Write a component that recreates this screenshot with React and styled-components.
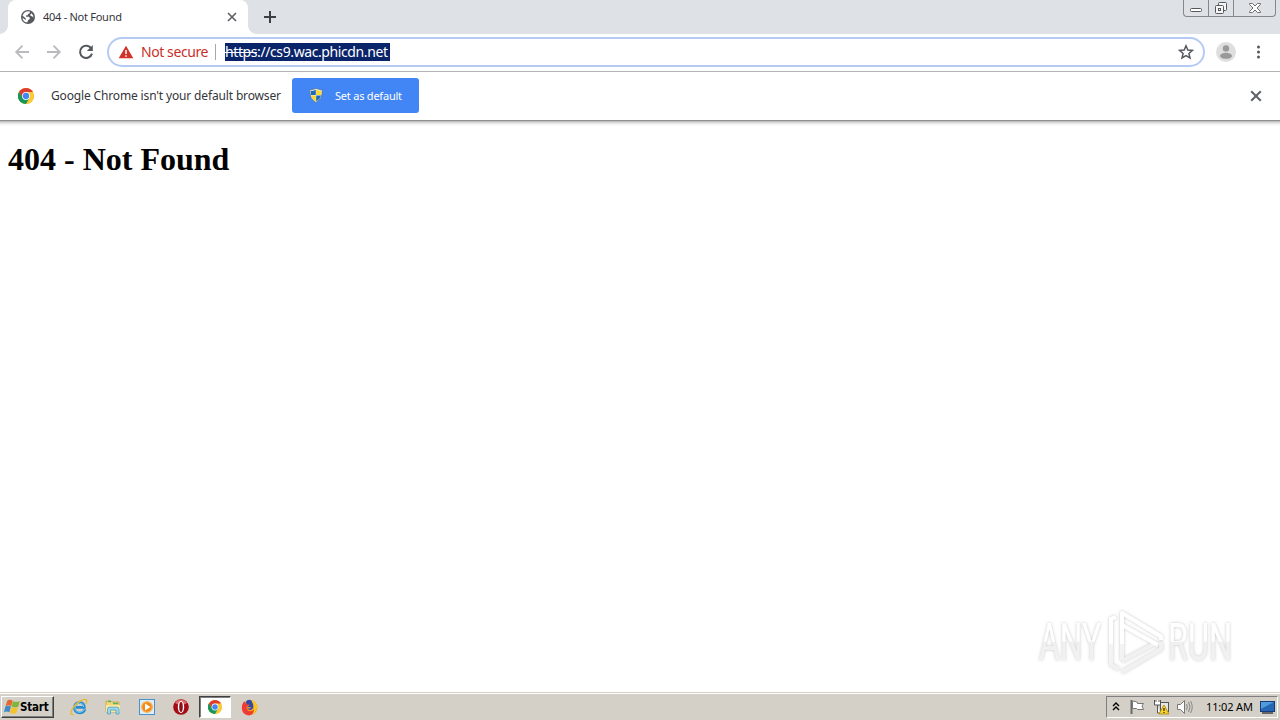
import React from 'react';
import styled, { createGlobalStyle } from 'styled-components';

const Global = createGlobalStyle`
  * { box-sizing: border-box; }
  html, body { margin: 0; overflow: hidden; }
  body { font-family: "DejaVu Sans Condensed", "DejaVu Sans", sans-serif; }
  svg { display: block; flex: none; }
`;

const Screen = styled.div`
  width: 1280px;
  height: 720px;
  display: flex;
  flex-direction: column;
  background: #fff;
  overflow: hidden;
`;

const Label = styled.span`
  font-family: ${p => p.$font || '"Noto Sans", sans-serif'};
  font-size: ${p => p.$size}px;
  letter-spacing: ${p => p.$track || 0}px;
  color: ${p => p.$color || '#35363a'};
  font-weight: ${p => p.$weight || 400};
  line-height: 18px;
  white-space: pre;
`;

const TabStrip = styled.header`
  height: 34px;
  flex: none;
  display: flex;
  background: #dee1e6;
`;

const Tab = styled.div`
  position: relative;
  width: 240px;
  margin-left: 8px;
  padding: 0 11px 0 13px;
  display: flex;
  align-items: center;
  background: #fff;
  border-radius: 8px 8px 0 0;
  &::before, &::after {
    content: "";
    position: absolute;
    bottom: 0;
    width: 8px;
    height: 8px;
  }
  &::before { left: -8px; background: radial-gradient(circle at 0 0, #dee1e6 7.5px, #fff 8px); }
  &::after { right: -8px; background: radial-gradient(circle at 100% 0, #dee1e6 7.5px, #fff 8px); }
`;

const TabTitle = styled.div`
  flex: 1;
  display: flex;
  margin-left: 8px;
`;

const NewTab = styled.div`
  display: flex;
  align-items: center;
  margin-left: 15px;
  flex: 1;
`;

const WindowButtons = styled.div`
  display: flex;
  width: 93px;
  height: 17px;
  margin-right: 4px;
  border: 1px solid #85878d;
  border-top: 0;
  border-radius: 0 0 4px 4px;
`;

const WindowButton = styled.div`
  width: ${p => p.$w}px;
  display: flex;
  justify-content: center;
  border-right: ${p => (p.$last ? 0 : 1)}px solid #85878d;
`;

const Toolbar = styled.nav`
  height: 38px;
  flex: none;
  display: flex;
  align-items: center;
  padding: 0 11px 1px 14px;
  border-bottom: 1px solid #b3b4b8;
`;

const NavIcons = styled.div`
  display: flex;
  gap: 16px;
  width: 93px;
`;

const Omnibox = styled.div`
  width: 1098px;
  height: 30px;
  display: flex;
  align-items: center;
  border: 2px solid #b5cbf3;
  border-radius: 15px;
  padding: 0 9px 0 9px;
`;

const Security = styled.div`
  display: flex;
  align-items: center;
  gap: 7px;
  width: 98px;
  height: 16px;
  border-right: 1px solid #a5a7ab;
`;

const Selection = styled.div`
  display: flex;
  align-items: center;
  width: 165px;
  height: 18px;
  margin: 0 auto 0 9px;
  background: #0a246a;
  s { text-decoration-thickness: 1px; }
`;

const Avatar = styled.div`
  margin: 0 17px 0 11px;
`;

const InfoBar = styled.section`
  height: 49px;
  flex: none;
  display: flex;
  align-items: center;
  padding: 0 18px 1px;
  border-bottom: 1px solid #8e8e8e;
`;

const InfoMessage = styled.div`
  display: flex;
  width: 241px;
  margin-left: 17px;
`;

const DefaultButton = styled.div`
  width: 127px;
  height: 35px;
  display: flex;
  align-items: center;
  gap: 12px;
  padding-left: 17px;
  margin-right: auto;
  border-radius: 3px;
  background: #4285f4;
`;

const Page = styled.main`
  position: relative;
  flex: 1;
  padding: 19px 8px;
  background: linear-gradient(#b4b4b4, #e2e2e2 2px, #fafafa 4px, #fff 6px);
`;

const Heading = styled.h1`
  margin: 0;
  font: bold 32px/38px "Liberation Serif", serif;
  color: #000;
`;

const Watermark = styled.div`
  position: absolute;
  left: 1028px;
  top: 483px;
  svg { overflow: visible; }
`;

const Taskbar = styled.footer`
  height: 28px;
  flex: none;
  display: flex;
  align-items: center;
  padding: 3px 2px 2px;
  background: #d4d0c8;
  border-top: 1px solid #d4d0c8;
  box-shadow: inset 0 1px #fff;
`;

const StartButton = styled.div`
  width: 53px;
  height: 22px;
  display: flex;
  align-items: center;
  gap: 0;
  padding-left: 2px;
  margin-left: -1px;
  border: 1px solid;
  border-color: #fff #404040 #404040 #fff;
  box-shadow: inset -1px -1px #808080;
`;

const Launcher = styled.div`
  display: flex;
  align-items: center;
  justify-content: center;
  width: ${p => p.$w}px;
  height: 22px;
  margin-left: ${p => p.$gap || 0}px;
  ${p => p.$active && `
    background: #fff;
    border: 1px solid;
    border-color: #404040 #fff #fff #404040;
    box-shadow: inset 1px 1px #808080;
  `}
`;

const Tray = styled.div`
  display: flex;
  align-items: center;
  width: 172px;
  height: 22px;
  margin-left: auto;
  padding-left: 5px;
  border: 1px solid;
  border-color: #808080 #fff #fff #808080;
`;

const TrayItem = styled.div`
  display: flex;
  width: ${p => p.$w}px;
`;

const Cross = ({ size, color = '#5f6368', stroke = 2 }) => (
  <svg width={size} height={size} viewBox="0 0 10 10">
    <path d="M1 1L9 9M9 1L1 9" stroke={color} strokeWidth={stroke} fill="none" />
  </svg>
);

const Globe = () => (
  <svg width="14" height="14" viewBox="0 0 14 14">
    <circle cx="7" cy="7" r="7" fill="#56585c" />
    <path d="M5.2 1.5L8.7 1.2L8.8 3.2L7 4L6.8 5.2L4.8 5.5L5.2 6.8H8L9 8.2L8.2 9.6L7.2 10L6.2 12.6Q2 12 1.5 7.7L4.7 10V8.3L1.6 5.7Q2.4 2.5 5.2 1.5ZM10.4 3.2Q12.6 5 12.6 7.5L11 6.3L9.6 6L9.2 4.7Z" fill="#fff" />
  </svg>
);

const Arrow = ({ flip }) => (
  <svg width="16" height="16" viewBox="0 0 16 16">
    <path transform={flip ? 'translate(16 0) scale(-1 1)' : undefined} d="M15 8H2.5M8.5 1.7L2.2 8L8.5 14.3" stroke="#b9babd" strokeWidth="1.8" fill="none" />
  </svg>
);

const Reload = () => (
  <svg width="16" height="16" viewBox="0 0 16 16">
    <path d="M13.4 4.7A6.1 6.1 0 1 0 14 9.6" stroke="#55585d" strokeWidth="2" fill="none" />
    <path d="M14.8 1V7H8.8Z" fill="#55585d" />
  </svg>
);

const Chrome = ({ size }) => (
  <svg width={size} height={size} viewBox="0 0 32 32">
    <circle cx="16" cy="16" r="16" fill="#fcc934" />
    <path d="M16 16L2.15 8A16 16 0 0 1 29.85 8Z" fill="#dd3d31" />
    <path d="M16 8H29.85A16 16 0 0 1 16 32L22.9 20Z" fill="#fcc934" />
    <path d="M2.15 8A16 16 0 0 0 16 32L22.9 20L16 16L9.1 20Z" fill="#17985a" />
    <path d="M2.15 8L9.1 20L16 16V8Z" fill="#dd3d31" />
    <path d="M2.15 8A16 16 0 0 0 6 28.5L9.1 20Z" fill="#17985a" />
    <circle cx="16" cy="16" r="7.8" fill="#fff" />
    <circle cx="16" cy="16" r="6.3" fill="#4285f4" />
  </svg>
);

const Shield = () => (
  <svg width="14" height="15" viewBox="0 0 14 15">
    <path d="M7 .5L13.3 2.2Q13.5 10.6 7 14.5Q.5 10.6 .7 2.2Z" fill="#e9edf0" stroke="#59646a" strokeWidth=".6" />
    <path d="M6.8 1.7V7H1.8L1.7 3Q4.5 3 6.8 1.7Z" fill="#1e69b8" />
    <path d="M7.2 1.7Q9.5 3 12.3 3L12.2 7H7.2Z" fill="#f8d82c" />
    <path d="M1.9 7.4H6.8V13.4Q2.8 11 1.9 7.4Z" fill="#f8d82c" />
    <path d="M7.2 7.4H12.1Q11.2 11 7.2 13.4Z" fill="#1e69b8" />
  </svg>
);

const WindowsFlag = () => (
  <svg width="16" height="16" viewBox="0 0 16 16">
    <path d="M3.2 1.7Q5.8 -.2 8.6 1.7L7.2 7.2Q4.6 5.6 1.7 7.1Z" fill="#e4682f" />
    <path d="M9 2Q12 3.7 15.8 2L14.3 7.8Q10.5 9.2 7.6 7.5Z" fill="#82b63a" />
    <path d="M1.4 7.6Q4 6 6.9 7.6L5.4 13.3Q2.7 11.7 0 13.2Z" fill="#3e8ac9" />
    <path d="M7.3 8Q10.2 9.7 14 8.3L12.4 14.1Q9 15.4 5.9 13.8Z" fill="#f4c22b" />
  </svg>
);

const Explorer = () => (
  <svg width="18" height="18" viewBox="0 0 18 18">
    <path d="M15 11.2Q13.5 15 9.4 15Q4.4 14.5 4.4 9.6Q4.6 4.8 9.4 4.5Q14.4 4.8 14.4 9.4H6" stroke="#278bd0" strokeWidth="2.6" fill="none" />
    <path d="M14.6 11.4Q12.8 14.3 9.3 14.3Q4.9 13.6 5 9.4Q5.5 5.3 9.4 5Q13.6 5.2 13.8 9" stroke="#7bd0f6" strokeWidth="1" fill="none" />
    <path d="M3.5 16.3Q0 17.3 1.2 13.3Q3.5 7.5 9.5 3.4Q16.7-.5 16.7 3.1Q16.6 4.3 15.8 6" stroke="#e9b82e" strokeWidth="1.3" fill="none" />
  </svg>
);

const Folder = () => (
  <svg width="16" height="16" viewBox="0 0 16 16">
    <path d="M1 2H6L7 3H14V13H1Z" fill="#f4d67b" stroke="#d4a849" />
    <path d="M3 2.5H6M8 4.5H13" stroke="#4bb76b" strokeWidth="1.5" />
    <path d="M1 6H15V13H1Z" fill="#fae79d" />
    <path d="M2.5 15V10Q2.5 8.2 5 8.2H11.5Q14 8.2 14 10V15H11V11H5.5V15Z" fill="#9ad9ef" stroke="#4a9fc5" strokeWidth=".8" />
  </svg>
);

const MediaPlayer = () => (
  <svg width="16" height="16" viewBox="0 0 16 16">
    <rect x=".5" y=".5" width="15" height="15" fill="#dbeefb" stroke="#4b91c9" />
    <circle cx="8" cy="8" r="5.8" fill="#f18918" />
    <circle cx="8" cy="8" r="5.2" fill="none" stroke="#ffc361" strokeWidth=".8" />
    <path d="M6 4.5L11.5 8L6 11.5Z" fill="#fff" />
  </svg>
);

const Opera = () => (
  <svg width="16" height="16" viewBox="0 0 16 16">
    <circle cx="8" cy="8" r="7.8" fill="#a30b16" />
    <path d="M2 4Q4 .7 8 .7Q12 .7 14 4Q11 6 8 6Q5 6 2 4Z" fill="#df6b6b" />
    <ellipse cx="8" cy="8" rx="3.2" ry="5.9" fill="#fff" />
    <ellipse cx="8" cy="8" rx="1.8" ry="5" fill="#8c101a" />
  </svg>
);

const Firefox = () => (
  <svg width="17" height="17" viewBox="0 0 17 17">
    <circle cx="9" cy="8.5" r="7.5" fill="#f7a51c" />
    <path d="M5 4.5Q7 4 8.8 5.2Q7 7 5.5 8Q6 12.5 10 12.2Q12.5 12 13.5 10Q13 16 8 16.4Q1 16 .8 9Q.7 5.5 3 2.2Z" fill="#ef3a35" />
    <path d="M9.4.8Q15 2 16.2 7.5Q15.5 13 11.5 15Q15 9 11.2 5Z" fill="#ffc720" />
    <path d="M4.6 3Q7-.2 10.4 1.4L12 5Q13.3 9.8 9.4 11Q6.3 10.5 6 8L8.7 5.8L5.8 5Z" fill="#304caa" />
    <path d="M5.8 7.5Q8.3 8.5 10.5 8Q9 10 6.8 9.4Z" fill="#ff9624" />
  </svg>
);

const AnyRun = () => (
  <svg width="216" height="76" viewBox="0 0 216 76">
    <defs>
      <filter id="soft" x="-10%" y="-20%" width="120%" height="140%">
        <feDropShadow dx="0" dy="0" stdDeviation="1.6" floodColor="#888" floodOpacity=".5" />
      </filter>
      <linearGradient id="fade" x1="0" y1="0" x2="0" y2="76" gradientUnits="userSpaceOnUse">
        <stop offset=".49" stopColor="#fff" />
        <stop offset=".5" stopColor="#f0f0f0" />
        <stop offset="1" stopColor="#f4f4f4" />
      </linearGradient>
    </defs>
    <g filter="url(#soft)" fill="url(#fade)" fontFamily="Roboto, sans-serif" fontSize="51">
      <text x="11" y="56" textLength="62" lengthAdjust="spacingAndGlyphs">ANY</text>
      <text x="140" y="56" textLength="64" lengthAdjust="spacingAndGlyphs">RUN</text>
    </g>
    <g filter="url(#soft)" fill="none" strokeWidth="4" strokeLinejoin="round">
      <path d="M83 61V15L88 13M94 56V24" stroke="#f3f3f3" />
      <path d="M94 57L126 40M94 68L133 45V38M83 61L91 65" stroke="#f1f1f1" />
      <path d="M83 40V15L88 13M94 40V9L133 32.5V36M94 21L130 41" stroke="#fff" />
    </g>
  </svg>
);

const CHROME_FONT = '"DejaVu Sans Condensed", "DejaVu Sans", sans-serif';

export default function App() {
  return (
    <Screen>
      <Global />
      <TabStrip>
        <Tab>
          <Globe />
          <TabTitle><Label $size={11} $track={-0.27}>404 - Not Found</Label></TabTitle>
          <Cross size={10} stroke={1.7} />
        </Tab>
        <NewTab>
          <svg width="14" height="14"><path d="M7 1V13M1 7H13" stroke="#3c4043" strokeWidth="2" /></svg>
        </NewTab>
        <WindowButtons>
          <WindowButton $w={25}>
            <svg width="16" height="16"><rect x="2.5" y="8.5" width="11" height="3" rx="1" fill="#fff" stroke="#55585d" /></svg>
          </WindowButton>
          <WindowButton $w={25}>
            <svg width="16" height="16" fill="#f5f5f6" stroke="#55585d"><rect x="5.5" y="2.5" width="8" height="8" rx="1" /><rect x="2.5" y="5.5" width="8" height="8" rx="1" /><rect x="5.5" y="8.5" width="2" height="2" /></svg>
          </WindowButton>
          <WindowButton $w={41} $last>
            <svg width="16" height="16"><path d="M2.5 3.5H5.5L8 6L10.5 3.5H13.5V4.5L10 8L13.5 11.5V12.5H10.5L8 10L5.5 12.5H2.5V11.5L6 8L2.5 4.5Z" fill="#fff" stroke="#6b6e73" /></svg>
          </WindowButton>
        </WindowButtons>
      </TabStrip>
      <Toolbar>
        <NavIcons><Arrow /><Arrow flip /><Reload /></NavIcons>
        <Omnibox>
          <Security>
            <svg width="16" height="14"><path d="M8 .8L15.3 13.2H.7Z" fill="#d1322a" /><path d="M8 5V9M8 10.2V11.8" stroke="#fff" strokeWidth="1.5" /></svg>
            <Label $size={14} $track={-0.42} $color="#c92f29">Not secure</Label>
          </Security>
          <Selection><Label $size={14} $track={-0.4} $color="#fff"><s>https</s>://cs9.wac.phicdn.net</Label></Selection>
          <svg width="16" height="16"><path d="M8 1.8L9.8 6L14.4 6.4L10.9 9.4L12 13.9L8 11.5L4 13.9L5.1 9.4L1.6 6.4L6.2 6Z" fill="none" stroke="#55585d" strokeWidth="1.5" /></svg>
        </Omnibox>
        <Avatar>
          <svg width="20" height="20"><circle cx="10" cy="10" r="10" fill="#dedede" /><circle cx="10" cy="6.4" r="3.2" fill="#999" /><ellipse cx="10" cy="13.8" rx="6" ry="3" fill="#999" /></svg>
        </Avatar>
        <svg width="16" height="16" fill="#55585d"><circle cx="5.5" cy="3" r="1.5" /><circle cx="5.5" cy="8" r="1.5" /><circle cx="5.5" cy="13" r="1.5" /></svg>
      </Toolbar>
      <InfoBar>
        <Chrome size={16} />
        <InfoMessage><Label $size={12} $track={-0.15}>Google Chrome isn't your default browser</Label></InfoMessage>
        <DefaultButton><Shield /><Label $size={11} $track={-0.22} $color="#fff">Set as default</Label></DefaultButton>
        <Cross size={12} stroke={1.7} />
      </InfoBar>
      <Page>
        <Heading>404 - Not Found</Heading>
        <Watermark><AnyRun /></Watermark>
      </Page>
      <Taskbar>
        <StartButton><WindowsFlag /><Label $size={11.5} $font={CHROME_FONT} $weight={700} $color="#000" $track={-0.2}>Start</Label></StartButton>
        <Launcher $w={34} $gap={8}><Explorer /></Launcher>
        <Launcher $w={34}><Folder /></Launcher>
        <Launcher $w={34}><MediaPlayer /></Launcher>
        <Launcher $w={34}><Opera /></Launcher>
        <Launcher $w={32} $gap={1} $active><Chrome size={14} /></Launcher>
        <Launcher $w={34} $gap={1}><Firefox /></Launcher>
        <Tray>
          <TrayItem $w={17}><svg width="8" height="12" fill="none" stroke="#000" strokeWidth="1.4"><path d="M1 5L4 2L7 5M1 9L4 6L7 9" /></svg></TrayItem>
          <TrayItem $w={24}><svg width="16" height="16"><path d="M2.5 1V15" stroke="#6b6b6b" strokeWidth="2" /><path d="M3.5 2.5Q6 1.5 8.5 3.5V4.5H14.5L13 7L14.5 10.5H8.5L7.5 9.5H3.5Z" fill="#fff" stroke="#777" /></svg></TrayItem>
          <TrayItem $w={23}><svg width="17" height="16"><path d="M1.5 1V6H7.5V1M3 1V3M6 1V3M4.5 6V14H7" fill="#fff" stroke="#555" /><rect x="7.5" y="3.5" width="8" height="9" fill="#e6e6e6" stroke="#555" /><path d="M11 6L16 15H6Z" fill="#f9d52c" stroke="#b69318" /><path d="M11 9V12M11 13V14" stroke="#222" strokeWidth="1.2" /></svg></TrayItem>
          <TrayItem $w={30}><svg width="18" height="16"><path d="M1.5 5.5H4.5L8.5 1.5V14.5L4.5 10.5H1.5Z" fill="#fff" stroke="#777" /><path d="M10.5 5Q12 8 10.5 11M12.5 3Q15.5 8 12.5 13M14.5 2Q18 8 14.5 14" fill="none" stroke="#888" /></svg></TrayItem>
          <TrayItem $w={53}><Label $size={11} $track={-0.15} $color="#000">11:02 AM</Label></TrayItem>
          <svg width="17" height="16"><rect x="1.5" y="2.5" width="14" height="10" fill="#2467b5" stroke="#173a78" /><path d="M2 3H15L2 10Z" fill="#4f9bdc" /><path d="M3 14H14" stroke="#666" strokeWidth="2" /></svg>
        </Tray>
      </Taskbar>
    </Screen>
  );
}
